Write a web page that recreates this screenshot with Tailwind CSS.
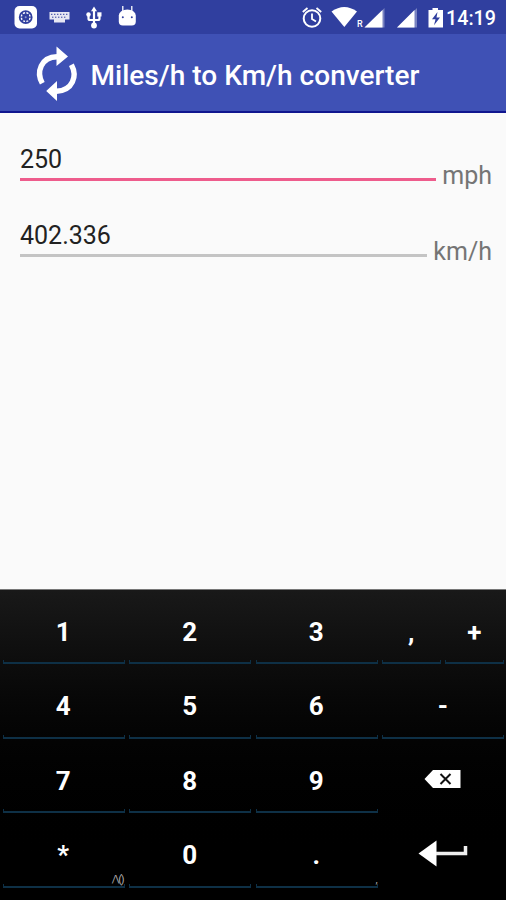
<!DOCTYPE html>
<html lang="en">

<head>
    <meta charset="UTF-8">
    <meta name="viewport" content="width=device-width, initial-scale=1.0">
    <title>Miles/h to Km/h converter</title>
    <script src="https://cdn.jsdelivr.net/npm/@tailwindcss/browser@4"></script>
</head>

<body class="w-[506px] h-[900px] overflow-hidden flex flex-col bg-[#fafafa] font-[Roboto,sans-serif]">
    <!-- Status bar -->
    <div class="h-[34px] shrink-0 bg-[#303f9f] flex text-white">
        <svg class="shrink-0" width="150" height="34" viewBox="0 0 150 34" fill="#fff">
            <!-- app -->
            <rect x="14.5" y="6" width="22.5" height="22.5" rx="5" />
            <circle cx="25.7" cy="17.2" r="6" fill="none" stroke="#303f9f" stroke-width="1.8" />
            <circle cx="25.7" cy="17.2" r="3.6" fill="#303f9f" />
            <path d="M25.7 11.500v11.400M20 17.200h11.400M21.700 13.200l8 8M29.700 13.200l-8 8" stroke="#303f9f" stroke-width="1.300" />
            <circle cx="25.700" cy="17.200" r="1" fill="#8d97cf" />
            <!-- keyboard -->
            <path d="M49.5 12h20v7.5h-4.5v3h-11v-3h-4.5z" opacity=".88" />
            <path d="M51 14.3h17M52 17.2h15" stroke="#303f9f" stroke-width="1" stroke-dasharray="1.4 1.6" />
            <!-- usb -->
            <path d="M94 10v15M88.5 15v3.5q0 1.5 1.5 1.5h8q1.5 0 1.5-1.5V15" fill="none" stroke="#fff" stroke-width="2.2" />
            <path d="M94 6.5l3 4.7h-6z" />
            <circle cx="88.5" cy="14.5" r="2.2" />
            <rect x="97.3" y="12.3" width="4.2" height="4.2" />
            <circle cx="94" cy="25.5" r="2.9" />
            <!-- android -->
            <path d="M118.8 15.5a8.5 6 0 0 1 17 0v6a4 4 0 0 1-4 4h-9a4 4 0 0 1-4-4z" />
            <path d="M122.8 6v5M131.8 6v5" stroke="#fff" stroke-width="1.3" />
            <circle cx="122.8" cy="17.3" r="1" fill="#303f9f" />
            <circle cx="131.8" cy="17.3" r="1" fill="#303f9f" />
        </svg>
        <svg class="ml-auto shrink-0" width="146" height="34" viewBox="300 0 146 34" fill="#fff">
            <!-- alarm -->
            <circle cx="312" cy="18.5" r="8.3" fill="none" stroke="#fff" stroke-width="2" />
            <path d="M312 13.5v5.5l4 2.5M302.8 12l4.7-4M321.2 12l-4.7-4" fill="none" stroke="#fff" stroke-width="1.8" />
            <!-- wifi -->
            <path d="M331.5 11.5q12.8-9 25.5 0L344.3 27z" />
            <text x="357" y="27" font-size="9" font-weight="500" font-family="Roboto, sans-serif">R</text>
            <!-- signal -->
            <path d="M364.5 27.5l20-19.5v19.5z" opacity=".35" />
            <path d="M364.5 27.5l18-17.5v17.5z" />
            <path d="M397 27.5l20-19.5v19.5z" opacity=".35" />
            <path d="M397 27.5L414.5 10v17.5z" />
            <!-- battery -->
            <path d="M428.5 10h4V8h5.5v2h5v17.5h-14.5z" />
            <path d="M437.5 12l-5.5 7.2h3.5l-1.5 6 6-7.7h-3.5z" fill="#303f9f" />
        </svg>
        <span class="w-[60px] shrink-0 pt-[3px] text-[19.7px] leading-[31px] font-medium">14:19</span>
    </div>

    <!-- App bar -->
    <header class="h-[79px] shrink-0 flex items-center bg-[#3f51b5] border-b-2 border-[#10168f] pl-[36px]">
        <svg class="shrink-0 overflow-visible" width="42" height="56" viewBox="36 45 42 56">
            <g fill="none" stroke="#fff" stroke-width="5.4">
                <path d="M42.3 83.3C36 72 41 57 57 56.7" />
                <path d="M71.4 64.7C77.5 76 73 90.5 56.5 91.3" />
            </g>
            <path d="M56.5 46.5l11.5 10-11.5 9.5zM57 81l-10.8 10L57 101z" fill="#fff" />
        </svg>
        <h1 class="ml-[12.5px] text-[28px] leading-8 font-medium tracking-[0.02px] text-white whitespace-nowrap pt-1.5">Miles/h to Km/h converter</h1>
    </header>

    <!-- Fields -->
    <main class="flex-1 pl-5 pr-[14px] pt-[27px] text-[25px] leading-[30px]">
        <div class="flex h-[50px]">
            <div class="flex-1 h-[41px] pt-[5px] border-b-[3px] border-[#ee5c8c] text-[#222]">250</div>
            <div class="pl-[6px] pt-[21px] text-[#757575]">mph</div>
        </div>
        <div class="flex h-[50px] mt-[26px]">
            <div class="flex-1 h-[41px] pt-[5px] border-b-[3px] border-[#c4c4c4] text-[#222]">402.336</div>
            <div class="pl-[6px] pt-[21px] text-[#757575]">km/h</div>
        </div>
    </main>

    <!-- Keyboard -->
    <div class="h-[311px] shrink-0 border-t border-[#777] bg-linear-to-b from-[#191919] to-black to-90% text-white text-[26px] font-bold">
        <div id="keys" class="grid grid-cols-8 auto-rows-[74.5px]"></div>
    </div>

    <template id="backspace">
        <svg width="38" height="20" viewBox="0 0 38 20">
            <path d="M.5 10L9 1h27.5v18H9z" fill="#fff" />
            <path d="M16.5 5l10 10M26.5 5l-10 10" stroke="#111" stroke-width="2" />
        </svg>
    </template>
    <template id="enter">
        <svg width="50" height="28" viewBox="0 0 50 28">
            <path d="M.5 13.5L18.5.5v26z" fill="#fff" />
            <path d="M18 13.5h29.5V6" fill="none" stroke="#eee" stroke-width="3.5" />
        </svg>
    </template>

    <script>
        const keys = [
            { label: '1' }, { label: '2' }, { label: '3' }, { label: ',', half: true }, { label: '+', half: true },
            { label: '4' }, { label: '5' }, { label: '6' }, { label: '-' },
            { label: '7' }, { label: '8' }, { label: '9' }, { icon: 'backspace' },
            { label: '*', hint: '/\\()' }, { label: '0' }, { label: '.', hint: ',' }, { icon: 'enter' },
        ]

        const grid = document.getElementById('keys')

        keys.forEach(key => {
            const cell = document.createElement('div')
            cell.className = key.half ? 'col-span-1 relative' : 'col-span-2 relative'

            if (key.icon) {
                cell.innerHTML = `<div class="h-full flex items-center justify-center pt-[6px]">${document.getElementById(key.icon).innerHTML}</div>`
            } else {
                cell.innerHTML = `
                    <div class="h-full flex items-center justify-center pt-[10px]">${key.label}</div>
                    <div class="absolute left-[2.5px] right-[2px] bottom-[0.5px] h-[4px] border-x border-b-2 border-[#0e3046]"></div>
                    ${key.hint ? `<span class="absolute right-[3px] bottom-[1px] text-[11px] leading-[14px] tracking-[-1.2px] font-normal text-[#aaa]">${key.hint}</span>` : ''}`
            }

            grid.appendChild(cell)
        })
    </script>
</body>

</html>
